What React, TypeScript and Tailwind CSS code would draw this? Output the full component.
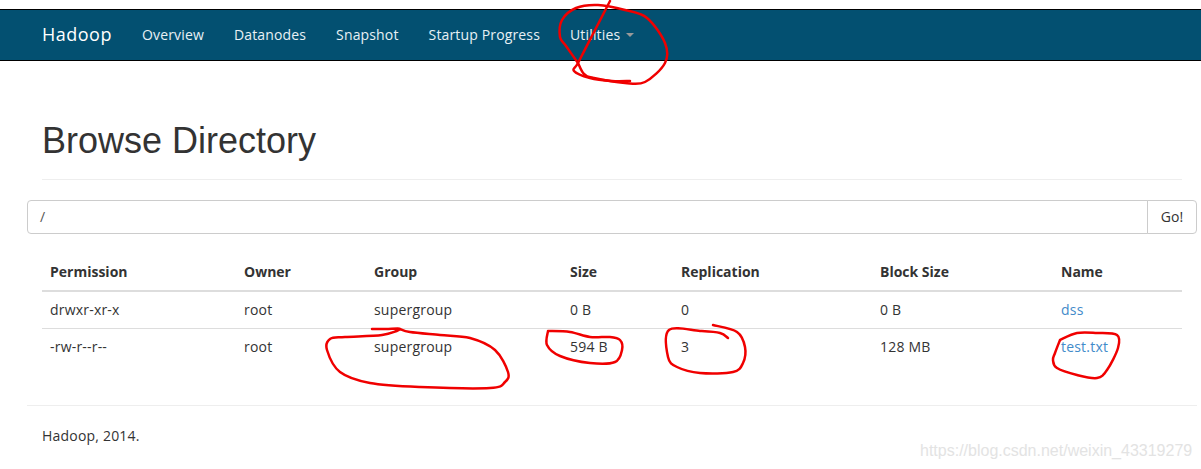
function smooth(p: number[][]) {
  let d = `M${p[0][0]} ${p[0][1]}`;
  for (let i = 0; i < p.length - 1; i++) {
    const a = p[Math.max(i - 1, 0)], b = p[i], c = p[i + 1], e = p[Math.min(i + 2, p.length - 1)];
    d += ` C${b[0] + (c[0] - a[0]) / 6} ${b[1] + (c[1] - a[1]) / 6} ${c[0] - (e[0] - b[0]) / 6} ${c[1] - (e[1] - b[1]) / 6} ${c[0]} ${c[1]}`;
  }
  return d;
}
const scribbles: number[][][] = [
  [[610, 1], [594, 32], [578, 63], [574, 71], [590, 78], [612, 81], [630, 81]],
  [[578, 63], [566, 46], [560, 37], [562, 20], [576, 8], [598, 5], [625, 10], [647, 18], [665, 43], [665, 63], [645, 82], [625, 83], [594, 78], [584, 74], [578, 63]],
  [[372, 329], [386, 329], [400, 329], [382, 335], [345, 337], [330, 339], [327, 350], [340, 372], [370, 383], [420, 387], [490, 388], [505, 382], [508, 372], [495, 350], [470, 338], [440, 335], [410, 332], [400, 329]],
  [[548, 331], [547, 345], [560, 356], [590, 363], [615, 362], [622, 350], [620, 340], [610, 337], [590, 337], [570, 332], [548, 331]],
  [[728, 338], [720, 333], [700, 331], [669, 330], [668, 357], [677, 367], [700, 373], [733, 372], [743, 363], [745, 347], [737, 332], [713, 325]],
  [[1060, 340], [1077, 333], [1097, 333], [1117, 335], [1118, 348], [1107, 370], [1097, 378], [1077, 375], [1057, 368], [1053, 360], [1055, 353], [1060, 340]],
];
const rows = [
  ["drwxr-xr-x", "root", "supergroup", "0 B", "0", "0 B", "dss"],
  ["-rw-r--r--", "root", "supergroup", "594 B", "3", "128 MB", "test.txt"],
];
const heads = ["Permission", "Owner", "Group", "Size", "Replication", "Block Size", "Name"];
const widths = ["w-[194px]", "w-[130px]", "w-[196px]", "w-[111px]", "w-[199px]", "w-[181px]", "w-[129px]"];
export default function App() {
  return (
    <div className="relative w-[1201px] h-[469px] overflow-hidden bg-white pt-[9px] text-[14px] text-[#333] font-['Open_Sans','Noto_Sans',sans-serif]">
      <nav className="h-[52px] bg-[#035071] border-y border-black flex items-center pl-[42px] text-[#e8f1f5]">
        <span className="text-[18px] text-white w-[85px] tracking-[0.5px] pb-[1px]">Hadoop</span>
        <div className="flex items-center pb-[2px] tracking-[0.15px]">
          <a className="px-[15px]">Overview</a>
          <a className="px-[15px]">Datanodes</a>
          <a className="px-[15px]">Snapshot</a>
          <a className="px-[15px]">Startup Progress</a>
          <a className="px-[15px] flex items-center gap-[6px]">Utilities<span className="border-x-4 border-x-transparent border-t-4 border-t-[#999] mt-[2px]" /></a>
        </div>
      </nav>
      <main className="pl-[27px] pr-[4px]">
        <div className="ml-[15px] mr-[15px] mt-[39px] h-[80px] border-b border-[#eee]">
          <h1 className="text-[36px] leading-[40px] pt-[21px] text-[#333] font-['Liberation_Sans',sans-serif]">Browse Directory</h1>
        </div>
        <div className="flex mt-[20px] h-[34px]">
          <div className="flex-1 border border-[#ccc] rounded-l-[4px] px-[12px] leading-[32px] text-[#555]">/</div>
          <div className="w-[50px] -ml-px border border-[#ccc] rounded-r-[4px] text-center leading-[32px]">Go!</div>
        </div>
        <table className="ml-[15px] mt-[20px] table-fixed border-collapse w-[1140px]">
          <thead>
            <tr className="border-b-2 border-[#ddd]">
              {heads.map((h, i) => <th key={h} className={`${widths[i]} text-left font-bold px-[8px] pb-[2px] h-[37px]`}>{h}</th>)}
            </tr>
          </thead>
          <tbody>
            {rows.map((r, ri) => (
              <tr key={ri} className={ri === 0 ? "border-b border-[#ddd]" : ""}>
                {r.map((c, i) => <td key={i} className={`px-[8px] h-[37px] tracking-[0.2px] ${i === 6 ? "text-[#428bca]" : ""}`}>{c}</td>)}
              </tr>
            ))}
          </tbody>
        </table>
        <div className="mt-[40px] border-t border-[#eee] pl-[15px] pt-[20px] leading-[20px] tracking-[0.2px]">Hadoop, 2014.</div>
      </main>
      <span className="absolute left-[920px] top-[442px] text-[16px] leading-[18px] text-[#e3e3e3] font-['Liberation_Sans',sans-serif] whitespace-nowrap">https://blog.csdn.net/weixin_43319279</span>
      <svg className="absolute inset-0" width="1201" height="469" fill="none" stroke="#f00000" strokeWidth="2.5" strokeLinecap="round" strokeLinejoin="round">
        {scribbles.map((s, i) => <path key={i} d={smooth(s)} />)}
      </svg>
    </div>
  );
}
